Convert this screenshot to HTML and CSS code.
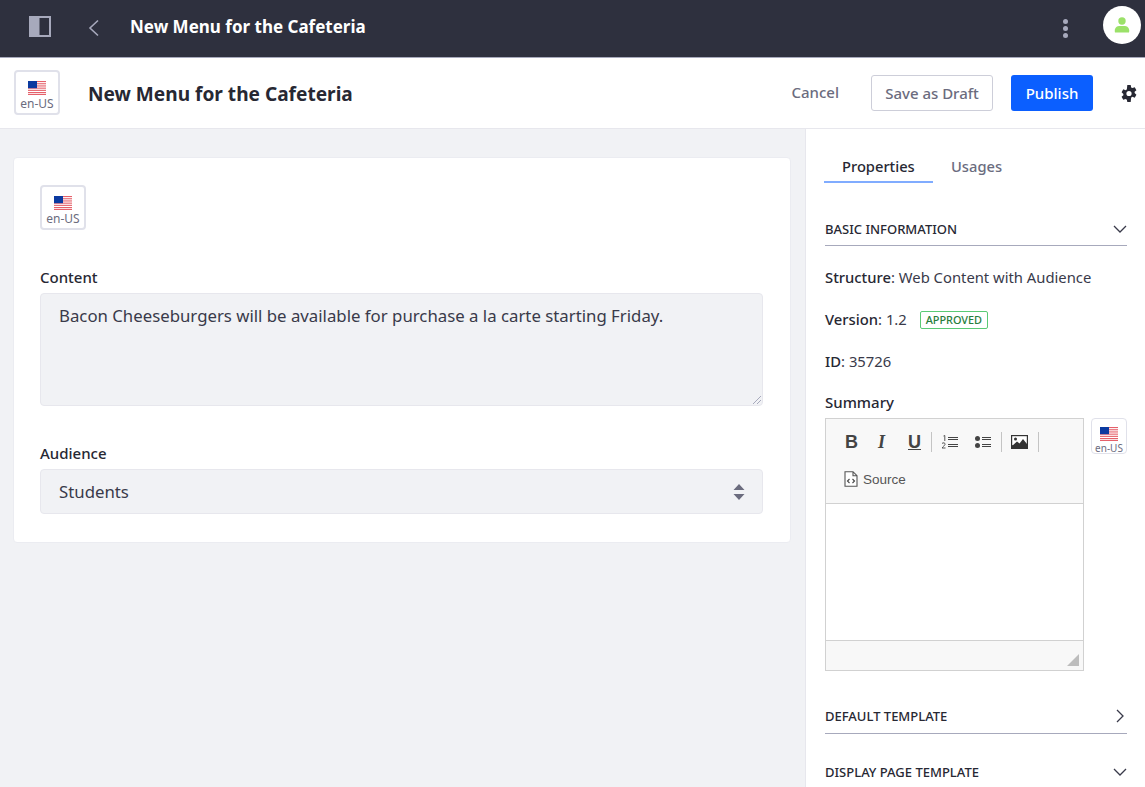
FILE: index.html
```html
<!DOCTYPE html>
<html lang="en">
<head>
    <meta charset="UTF-8">
    <meta name="viewport" content="width=device-width, initial-scale=1.0">
    <title>New Menu for the Cafeteria</title>
    <link rel="stylesheet" href="styles.css">
</head>
<body>
    <svg class="defs" width="0" height="0" aria-hidden="true">
        <symbol id="flag" viewBox="0 0 18 14">
            <rect width="18" height="14" fill="#fff"/>
            <rect y="0" width="18" height="1.1" fill="#e5606a"/>
            <rect y="2.2" width="18" height="1.1" fill="#e5606a"/>
            <rect y="4.4" width="18" height="1.1" fill="#e5606a"/>
            <rect y="6.6" width="18" height="1.1" fill="#e5606a"/>
            <rect y="8.8" width="18" height="1.1" fill="#e5606a"/>
            <rect y="11" width="18" height="1.1" fill="#e5606a"/>
            <rect y="12.9" width="18" height="1.1" fill="#e5606a"/>
            <rect width="9" height="7.2" fill="#0b3aa0"/>
        </symbol>
    </svg>

    <nav class="topbar">
        <svg class="sidebar-icon" width="22" height="21" viewBox="0 0 22 21">
            <rect x="0" y="0" width="22" height="21" fill="#a7a9bc"/>
            <rect x="10.500" y="2" width="9.500" height="17" fill="#2e303e"/>
        </svg>
        <svg class="back-icon" width="12" height="18" viewBox="0 0 12 18">
            <path d="M10 1.500 2 9l8 7.500" fill="none" stroke="#a7a9bc" stroke-width="1.600"/>
        </svg>
        <span class="topbar-title">New Menu for the Cafeteria</span>
        <div class="topbar-right">
            <div class="kebab"><i></i><i></i><i></i></div>
            <div class="avatar">
                <svg width="16" height="16" viewBox="0 0 16 16">
                    <circle cx="8" cy="4" r="3.700" fill="#9be169"/>
                    <path d="M1 15.500c-1-3.500 1-6.500 4-6.500h6c3 0 5 3 4 6.500z" fill="#9be169"/>
                </svg>
            </div>
        </div>
    </nav>

    <header class="toolbar">
        <div class="locale locale-head">
            <svg class="flag" width="18" height="14"><use href="#flag"/></svg>
            <span>en-US</span>
        </div>
        <h1 class="page-title">New Menu for the Cafeteria</h1>
        <div class="actions">
            <a class="cancel">Cancel</a>
            <button class="btn btn-draft">Save as Draft</button>
            <button class="btn btn-publish">Publish</button>
            <svg class="gear" width="16" height="17" viewBox="1 .5 14 15">
                <path fill-rule="evenodd" fill="#272833" d="M6.500 0h3l.4 2.100c.4.150.8.350 1.150.6l2-.75 1.500 2.600-1.600 1.400c.05.400.05.800 0 1.200l1.600 1.400-1.500 2.600-2-.75c-.35.250-.75.450-1.150.6L9.500 15h-3l-.4-2.100a5 5 0 0 1-1.150-.6l-2 .75-1.500-2.600 1.600-1.400a5 5 0 0 1 0-1.200L1.450 6.450l1.500-2.600 2 .75c.35-.250.75-.450 1.150-.6zM8 5.200a2.300 2.300 0 1 0 0 4.600 2.300 2.300 0 0 0 0-4.600z" transform="translate(0 .5)"/>
            </svg>
        </div>
    </header>

    <div class="layout">
        <main class="content">
            <section class="card">
                <div class="locale">
                    <svg class="flag" width="18" height="14"><use href="#flag"/></svg>
                    <span>en-US</span>
                </div>
                <label class="field-label field-content">Content</label>
                <div class="textarea">
                    Bacon Cheeseburgers will be available for purchase a la carte starting Friday.
                    <svg class="grip" width="10" height="10" viewBox="0 0 10 10">
                        <path d="M1 9 9 1M5 9l4-4" stroke="#a7a9bc" stroke-width="1"/>
                    </svg>
                </div>
                <label class="field-label field-audience">Audience</label>
                <div class="select">
                    <span>Students</span>
                    <svg width="12" height="16" viewBox="0 0 12 16">
                        <path d="M6 0l5.500 6H.5zM6 16l5.500-6H.5z" fill="#6b6c7e"/>
                    </svg>
                </div>
            </section>
        </main>

        <aside class="sidebar">
            <div class="tabs">
                <span class="tab tab-active">Properties</span>
                <span class="tab">Usages</span>
            </div>

            <div class="panel-head panel-basic">
                <span>BASIC INFORMATION</span>
                <svg width="14" height="14" viewBox="0 0 14 14"><path d="M1 4l6 6 6-6" fill="none" stroke="#393a4a" stroke-width="1.300"/></svg>
            </div>

            <p class="info"><b>Structure</b>: Web Content with Audience</p>
            <p class="info"><b>Version</b>: 1.2 <span class="badge">APPROVED</span></p>
            <p class="info"><b>ID</b>: 35726</p>

            <label class="field-label field-summary">Summary</label>
            <div class="summary-row">
                <div class="editor">
                    <div class="editor-tools">
                        <div class="tool-row">
                            <span class="tool tool-b">B</span>
                            <span class="tool tool-i">I</span>
                            <span class="tool tool-u">U</span>
                            <i class="tool-sep"></i>
                            <svg class="tool-svg" width="16" height="14" viewBox="0 0 16 14">
                                <path d="M6 2.500h10M6 4.500h10M6 9.500h10M6 11.500h10" stroke="#444" stroke-width="1.200"/>
                                <path d="M1.500 1 2.800.5V6M0 8.500c1-1.200 3.500-.8 3 1-.3 1-2 2-3 3.500h3.500" fill="none" stroke="#444" stroke-width=".9"/>
                            </svg>
                            <svg class="tool-svg tool-ul" width="16" height="14" viewBox="0 0 16 14">
                                <circle cx="2.500" cy="3.500" r="2.500" fill="#444"/>
                                <circle cx="2.500" cy="10.500" r="2.500" fill="#444"/>
                                <path d="M7 2.500h9M7 4.500h9M7 9.500h9M7 11.500h9" stroke="#444" stroke-width="1.200"/>
                            </svg>
                            <i class="tool-sep tool-sep-b"></i>
                            <svg class="tool-svg tool-img" width="17" height="14" viewBox="0 0 17 14">
                                <rect width="17" height="14" fill="#333"/>
                                <rect x="1.200" y="1.200" width="14.600" height="9" fill="#fff"/>
                                <circle cx="4.500" cy="4" r="1.500" fill="#333"/>
                                <path d="M1 11 6 6.500l2.500 2L12 4l4 5v3H1z" fill="#333"/>
                            </svg>
                            <i class="tool-sep tool-sep-c"></i>
                        </div>
                        <div class="tool-row tool-row-source">
                            <svg width="14" height="16" viewBox="0 0 14 16">
                                <path d="M1 .700h8L13 4.700v10.600H1z M9 .700v4h4" fill="#fff" stroke="#555" stroke-width="1.100"/>
                                <path d="M5.500 8 3.500 10l2 2M8.500 8l2 2-2 2" fill="none" stroke="#444" stroke-width="1.100"/>
                            </svg>
                            <span>Source</span>
                        </div>
                    </div>
                    <div class="editor-body"></div>
                    <div class="editor-foot">
                        <svg width="12" height="12" viewBox="0 0 12 12"><path d="M12 0v12H0z" fill="#bdbdbd"/></svg>
                    </div>
                </div>
                <div class="locale locale-small">
                    <svg class="flag" width="18" height="14"><use href="#flag"/></svg>
                    <span>en-US</span>
                </div>
            </div>

            <div class="panel-head panel-default">
                <span>DEFAULT TEMPLATE</span>
                <svg width="14" height="14" viewBox="0 0 14 14"><path d="M4 1l6 6-6 6" fill="none" stroke="#393a4a" stroke-width="1.300"/></svg>
            </div>
            <div class="panel-head panel-display">
                <span>DISPLAY PAGE TEMPLATE</span>
                <svg width="14" height="14" viewBox="0 0 14 14"><path d="M1 4l6 6 6-6" fill="none" stroke="#393a4a" stroke-width="1.300"/></svg>
            </div>
        </aside>
    </div>
</body>
</html>
```

FILE: styles.css
```css
* {
    box-sizing: border-box;
}
html, body {
    height: 787px;
    overflow: hidden;
}
body {
    margin: 0;
    font-family: "Noto Sans", Arial, sans-serif;
    font-size: 16px;
    color: #272833;
    background: #f1f2f5;
}
.defs {
    display: block;
    height: 0;
}

/* top bar */
.topbar {
    display: flex;
    align-items: center;
    height: 58px;
    padding-left: 29px;
    background: #2e303e;
    border-bottom: 1px solid #a7a9bc;
}
.sidebar-icon {
    margin-right: 37px;
    margin-top: -5px;
}
.back-icon {
    margin-right: 30px;
    margin-top: -2px;
}
.topbar-title {
    color: #fff;
    font-size: 17px;
    font-weight: 700;
    margin-top: -4px;
}
.topbar-right {
    display: flex;
    align-items: center;
    margin-left: auto;
    margin-right: 4px;
}
.kebab {
    display: flex;
    flex-direction: column;
    gap: 2px;
    margin-right: 35px;
}
.kebab i {
    display: block;
    width: 5px;
    height: 5px;
    border-radius: 50%;
    background: #a7a9bc;
}
.avatar {
    display: flex;
    align-items: center;
    justify-content: center;
    width: 38px;
    height: 38px;
    border-radius: 50%;
    background: #fff;
    margin-top: -7px;
}

/* header under the bar */
.toolbar {
    display: flex;
    align-items: center;
    height: 71px;
    padding-left: 14px;
    background: #fff;
    border-bottom: 1px solid #e7e7ed;
}
.locale {
    display: flex;
    flex-direction: column;
    align-items: center;
    justify-content: center;
    width: 46px;
    height: 45px;
    background: #fff;
    border: 2px solid #e0e1ea;
    border-radius: 4px;
    color: #6b6c7e;
    font-size: 12px;
    line-height: 16px;
    padding-top: 7px;
}
.locale-head {
    margin-top: -1px;
}
.flag {
    display: block;
    flex-shrink: 0;
    margin-bottom: 1px;
}
.page-title {
    margin: 1px 0 0 28px;
    font-size: 19.100px;
    font-weight: 700;
}
.actions {
    display: flex;
    align-items: center;
    margin-left: auto;
    margin-right: 8px;
}
.cancel {
    color: #6b6c7e;
    font-size: 15px;
    font-weight: 500;
    margin-right: 32px;
    margin-top: -3px;
}
.btn {
    height: 36px;
    font-family: inherit;
    font-size: 15px;
    font-weight: 500;
    border-radius: 3px;
    padding: 0;
}
.btn-draft {
    width: 122px;
    color: #6b6c7e;
    background: #fff;
    border: 1px solid #cdced9;
    margin-right: 18px;
}
.btn-publish {
    width: 82px;
    color: #fff;
    background: #0b5fff;
    border: 0;
    margin-right: 28px;
}

/* main area */
.layout {
    display: flex;
    height: 658px;
}
.content {
    flex: 0 0 806px;
    padding: 28px 14px 0 13px;
    border-right: 1px solid #e7e7ed;
}
.card {
    height: 386px;
    padding: 27px 27px 0 26px;
    background: #fff;
    border: 1px solid #ebecf1;
    border-radius: 4px;
}
.field-label {
    display: block;
    font-size: 15px;
    font-weight: 500;
    line-height: 20px;
}
.field-content {
    margin-top: 37px;
    margin-bottom: 6px;
}
.field-audience {
    margin-top: 37px;
    margin-bottom: 6px;
}
.textarea {
    position: relative;
    height: 113px;
    padding: 10px 18px;
    font-size: 16.800px;
    line-height: 24px;
    color: #393a4a;
    background: #f1f2f5;
    border: 1px solid #e7e7ed;
    border-radius: 4px;
}
.grip {
    position: absolute;
    right: 0;
    bottom: 0;
}
.select {
    display: flex;
    align-items: center;
    justify-content: space-between;
    height: 45px;
    padding: 0 17px 0 18px;
    font-size: 16.800px;
    color: #393a4a;
    background: #f1f2f5;
    border: 1px solid #e7e7ed;
    border-radius: 4px;
}

/* right side panel */
.sidebar {
    flex: 1;
    padding: 0 18px 0 19px;
    background: #fff;
    overflow: hidden;
}
.tabs {
    display: flex;
    height: 55px;
    margin-left: -1px;
    padding-top: 27px;
}
.tab {
    display: block;
    height: 27px;
    padding: 0 18px;
    font-size: 14.700px;
    font-weight: 500;
    line-height: 20px;
    color: #6b6c7e;
}
.tab-active {
    color: #272833;
    width: 109px;
    border-bottom: 2px solid #80acff;
}
.panel-head {
    display: flex;
    align-items: center;
    justify-content: space-between;
    height: 34px;
    font-size: 13px;
    font-weight: 500;
    color: #272833;
    border-bottom: 1px solid #a7a9bc;
}
.panel-basic {
    margin-top: 28px;
}
.panel-default {
    margin-top: 29px;
    padding-bottom: 2px;
}
.panel-display {
    margin-top: 22px;
    padding-bottom: 2px;
    border-bottom: 0;
}
.info {
    margin: 21px 0 0;
    font-size: 14.800px;
    line-height: 21px;
    color: #393a4a;
}
.info b {
    font-weight: 500;
    color: #272833;
}
.badge {
    display: inline-block;
    height: 18px;
    margin-left: 9px;
    padding: 0 5px;
    font-size: 10.900px;
    font-weight: 500;
    line-height: 16px;
    color: #287d3c;
    border: 1px solid #5aca75;
    border-radius: 2px;
    vertical-align: 1px;
}
.field-summary {
    margin-top: 20px;
    margin-bottom: 6px;
}
.summary-row {
    display: flex;
    align-items: flex-start;
    gap: 7px;
}
.locale-small {
    width: 36px;
    height: 36px;
    border-width: 1px;
    font-size: 10px;
    line-height: 11px;
    justify-content: flex-start;
    padding-top: 8px;
}
.locale-small .flag {
    margin-bottom: 2px;
}

/* rich text editor */
.editor {
    width: 259px;
    height: 253px;
    border: 1px solid #d1d1d1;
    background: #f8f8f8;
    display: flex;
    flex-direction: column;
    flex-shrink: 0;
}
.editor-tools {
    height: 85px;
    padding-left: 19px;
    border-bottom: 1px solid #d1d1d1;
}
.tool-row {
    display: flex;
    align-items: center;
    height: 20px;
    margin-top: 13px;
}
.tool {
    font-family: "Liberation Sans", Arial, sans-serif;
    font-size: 18px;
    color: #444;
    line-height: 20px;
}
.tool-b {
    font-weight: 700;
    width: 31px;
}
.tool-i {
    font-family: "Liberation Serif", serif;
    font-style: italic;
    font-weight: 700;
    width: 32px;
    padding-left: 2px;
}
.tool-u {
    text-decoration: underline;
    font-weight: 700;
    width: 23px;
}
.tool-sep {
    display: block;
    width: 1px;
    height: 20px;
    background: #c4c4c4;
    margin-right: 10px;
}
.tool-ul {
    margin-left: 17px;
}
.tool-sep-b {
    margin-left: 10px;
    margin-right: 9px;
}
.tool-sep-c {
    margin-left: 10px;
}
.tool-row-source {
    margin-top: 17px;
    margin-left: -1px;
    gap: 5px;
    font-family: "Liberation Sans", Arial, sans-serif;
    font-size: 13.500px;
    color: #555;
}
.editor-body {
    flex: 1;
    background: #fff;
}
.editor-foot {
    display: flex;
    align-items: flex-end;
    justify-content: flex-end;
    height: 30px;
    padding: 0 4px 4px 0;
    border-top: 1px solid #d1d1d1;
}
```
